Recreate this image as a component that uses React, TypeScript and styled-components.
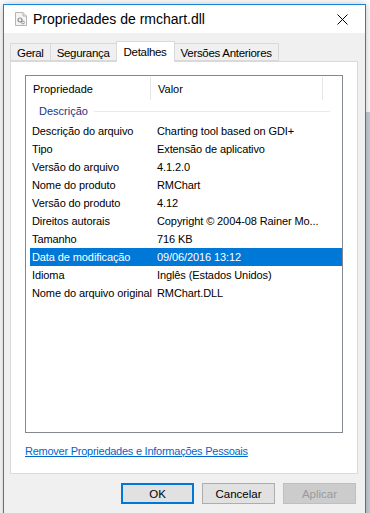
import React from "react";
import styled, { createGlobalStyle } from "styled-components";

const GlobalStyle = createGlobalStyle`
  html, body {
    margin: 0;
    padding: 0;
  }

  body {
    font-family: "Liberation Sans", Arial, sans-serif;
    font-size: 11px;
    color: #000;
    background: #ffffff;
  }
`;

const Desktop = styled.div`
  width: 370px;
  height: 513px;
  overflow: hidden;
  box-sizing: border-box;
  padding: 4px 4px 0 3px;

  background:
    linear-gradient(to bottom, #ffffff 0, #ffffff 112px, #c7d0dc 112px) right / 4px 100% no-repeat,
    #ffffff;
`;

const Window = styled.div`
  width: 363px;
  height: 520px;
  box-sizing: border-box;

  border: 1px solid #1883d7;
  background-color: #f0f0f0;
  box-shadow: 0 0 8px rgba(0, 0, 0, 0.25);

  display: flex;
  flex-direction: column;
`;

const TitleBar = styled.div`
  height: 28px;
  flex-shrink: 0;
  background-color: #ffffff;

  display: flex;
  align-items: center;
  padding-left: 11px;
`;

const Title = styled.span`
  margin-left: 6px;
  font-size: 14px;
  color: #000;
  flex: 1;
`;

const CloseButton = styled.div`
  width: 46px;
  height: 28px;

  display: flex;
  align-items: center;
  justify-content: center;
`;

const Body = styled.div`
  padding: 8px 8px 0 6px;
  display: flex;
  flex-direction: column;
`;

const TabRow = styled.div`
  display: flex;
  align-items: flex-end;
  height: 20px;
  padding-left: 1px;
  position: relative;
  z-index: 1;
`;

const Tab = styled.div<{ $active?: boolean }>`
  box-sizing: border-box;
  height: ${(p) => (p.$active ? "21px" : "18px")};
  padding: 0 ${(p) => (p.$active ? "7px" : "6px")};
  margin-bottom: ${(p) => (p.$active ? "-1px" : "0")};

  border: 1px solid #d9d9d9;
  border-bottom: ${(p) => (p.$active ? "none" : "1px solid #d9d9d9")};
  margin-left: -1px;
  background-color: ${(p) => (p.$active ? "#ffffff" : "#f0f0f0")};

  display: flex;
  align-items: center;
  padding-top: ${(p) => (p.$active ? "0" : "1px")};
  white-space: nowrap;
  font-size: 11.5px;
  letter-spacing: -0.3px;
`;

const Panel = styled.div`
  box-sizing: border-box;
  width: 348px;
  height: 413px;

  border: 1px solid #d9d9d9;
  background-color: #ffffff;

  padding: 13px 0 0 14px;
  display: flex;
  flex-direction: column;
`;

const ListBox = styled.div`
  box-sizing: border-box;
  width: 318px;
  height: 358px;
  border: 1px solid #828790;
  background-color: #ffffff;
`;

const Header = styled.div`
  display: grid;
  grid-template-columns: 125px 172px;
  height: 24px;
`;

const HeaderCell = styled.div`
  padding-left: 7px;
  display: flex;
  align-items: center;
  border-right: 1px solid #e5e5e5;
  margin: 1px 0 0;
`;

const Group = styled.div`
  height: 22px;
  display: flex;
  align-items: center;
  padding-left: 13px;
`;

const GroupLabel = styled.span`
  color: #1e3287;
  margin-right: 6px;
`;

const GroupLine = styled.div`
  flex: 0 0 236px;
  height: 1px;
  background-color: #e2eaf3;
`;

const Row = styled.div<{ $selected?: boolean }>`
  display: grid;
  grid-template-columns: 120px 173px;
  height: 18px;
  margin-left: 4px;
  align-items: center;
  letter-spacing: -0.1px;

  background-color: ${(p) => (p.$selected ? "#0078d7" : "transparent")};
  color: ${(p) => (p.$selected ? "#ffffff" : "#000000")};
`;

const NameCell = styled.span`
  padding-left: 2px;
  white-space: nowrap;
`;

const ValueCell = styled.span`
  padding-left: 7px;
  white-space: nowrap;
  overflow: hidden;
`;

const RemoveLink = styled.a`
  margin-top: 12px;
  color: #0066cc;
  text-decoration: underline;
  letter-spacing: -0.25px;
  cursor: pointer;
  align-self: flex-start;
`;

const ButtonRow = styled.div`
  display: flex;
  justify-content: flex-end;
  gap: 8px;
  margin-top: 9px;
  padding-right: 1px;
`;

const Button = styled.button<{ $default?: boolean }>`
  box-sizing: border-box;
  width: 73px;
  height: 21px;
  font-family: inherit;
  font-size: 11.5px;
  padding: 0;

  background-color: ${(p) => (p.disabled ? "#cccccc" : "#e1e1e1")};
  color: ${(p) => (p.disabled ? "#9a9a9a" : "#000000")};
  border: ${(p) =>
    p.$default ? "2px solid #0078d7" : p.disabled ? "1px solid #bfbfbf" : "1px solid #adadad"};
`;

const FileIcon = () => (
  <svg width="12" height="14" viewBox="0 0 12 14">
    <path d="M0.5 0.5 H8 L11.5 4 V13.5 H0.5 Z" fill="#f4f4f4" stroke="#b5b5b5" />
    <path d="M8 0.5 V4 H11.5" fill="#e2e2e2" stroke="#b5b5b5" />
    <circle cx="5" cy="8" r="2" fill="none" stroke="#8a8a8a" strokeWidth="1.2" />
    <circle cx="8" cy="10.5" r="1.4" fill="none" stroke="#9a9a9a" strokeWidth="1" />
  </svg>
);

const CloseIcon = () => (
  <svg width="11" height="11" viewBox="0 0 11 11">
    <path d="M0.5 0.5 L10.5 10.5 M10.5 0.5 L0.5 10.5" stroke="#000" strokeWidth="1" />
  </svg>
);

const details: [string, string][] = [
  ["Descrição do arquivo", "Charting tool based on GDI+"],
  ["Tipo", "Extensão de aplicativo"],
  ["Versão do arquivo", "4.1.2.0"],
  ["Nome do produto", "RMChart"],
  ["Versão do produto", "4.12"],
  ["Direitos autorais", "Copyright © 2004-08 Rainer Mo..."],
  ["Tamanho", "716 KB"],
  ["Data de modificação", "09/06/2016 13:12"],
  ["Idioma", "Inglês (Estados Unidos)"],
  ["Nome do arquivo original", "RMChart.DLL"],
];

const App: React.FC = () => {
  return (
    <>
      <GlobalStyle />
      <Desktop>
        <Window>
          <TitleBar>
            <FileIcon />
            <Title>Propriedades de rmchart.dll</Title>
            <CloseButton>
              <CloseIcon />
            </CloseButton>
          </TitleBar>

          <Body>
            <TabRow>
              <Tab>Geral</Tab>
              <Tab>Segurança</Tab>
              <Tab $active>Detalhes</Tab>
              <Tab>Versões Anteriores</Tab>
            </TabRow>

            <Panel>
              <ListBox>
                <Header>
                  <HeaderCell>Propriedade</HeaderCell>
                  <HeaderCell>Valor</HeaderCell>
                </Header>

                <Group>
                  <GroupLabel>Descrição</GroupLabel>
                  <GroupLine />
                </Group>

                {details.map(([name, value]) => (
                  <Row key={name} $selected={name === "Data de modificação"}>
                    <NameCell>{name}</NameCell>
                    <ValueCell>{value}</ValueCell>
                  </Row>
                ))}
              </ListBox>

              <RemoveLink>Remover Propriedades e Informações Pessoais</RemoveLink>
            </Panel>

            <ButtonRow>
              <Button $default>OK</Button>
              <Button>Cancelar</Button>
              <Button disabled>Aplicar</Button>
            </ButtonRow>
          </Body>
        </Window>
      </Desktop>
    </>
  );
};

export default App;
